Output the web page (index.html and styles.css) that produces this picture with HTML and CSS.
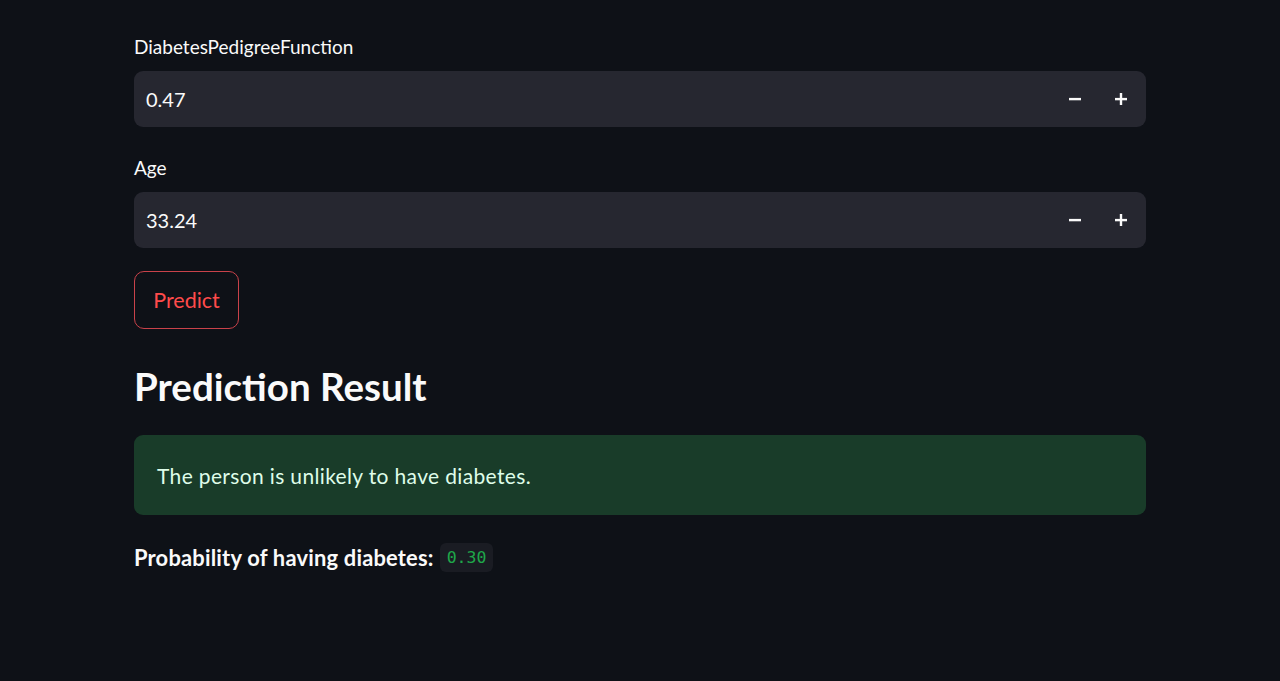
FILE: index.html
```html
<!DOCTYPE html>
<html>
<head>
<meta charset="utf-8">
<link rel="stylesheet" href="styles.css">
</head>
<body>
<main class="main">
  <div class="field">
    <label class="label">DiabetesPedigreeFunction</label>
    <div class="numinput">
      <span class="value">0.47</span>
      <div class="steps">
        <button class="step"><svg width="14" height="14" viewBox="0 0 14 14"><rect x="1" y="5.9" width="12" height="2.4" fill="#fafafa"/></svg></button>
        <button class="step"><svg width="14" height="14" viewBox="0 0 14 14"><rect x="1" y="5.9" width="12" height="2.4" fill="#fafafa"/><rect x="5.8" y="1" width="2.4" height="12" fill="#fafafa"/></svg></button>
      </div>
    </div>
  </div>
  <div class="field">
    <label class="label">Age</label>
    <div class="numinput">
      <span class="value">33.24</span>
      <div class="steps">
        <button class="step"><svg width="14" height="14" viewBox="0 0 14 14"><rect x="1" y="5.9" width="12" height="2.4" fill="#fafafa"/></svg></button>
        <button class="step"><svg width="14" height="14" viewBox="0 0 14 14"><rect x="1" y="5.9" width="12" height="2.4" fill="#fafafa"/><rect x="5.8" y="1" width="2.4" height="12" fill="#fafafa"/></svg></button>
      </div>
    </div>
  </div>
  <div class="btnrow"><button class="predict">Predict</button></div>
  <h2 class="heading">Prediction Result</h2>
  <div class="alert">The person is unlikely to have diabetes.</div>
  <p class="prob"><strong>Probability of having diabetes:</strong> <code class="code">0.30</code></p>
</main>
</body>
</html>
```

FILE: styles.css
```css
html, body {
  margin: 0;
  padding: 0;
  background: #0e1117;
  color: #fafafa;
  font-family: Lato, "Noto Sans", sans-serif;
  height: 100%;
}
.main {
  width: 1012px;
  margin-left: 134px;
  padding-top: 35px;
  display: flex;
  flex-direction: column;
}
.field {
  display: flex;
  flex-direction: column;
}
.field + .field {
  margin-top: 29px;
}
.label {
  font-size: 19px;
  line-height: 24px;
  height: 24px;
  margin-bottom: 12px;
}
.numinput {
  height: 56px;
  background: #262730;
  border-radius: 9px;
  display: flex;
  align-items: center;
  justify-content: space-between;
}
.value {
  padding-left: 12px;
  font-size: 20px;
}
.steps {
  display: flex;
  height: 100%;
  padding-right: 2px;
}
.step {
  width: 46px;
  height: 100%;
  border: 0;
  background: transparent;
  display: flex;
  align-items: center;
  justify-content: center;
  padding: 0;
}
.btnrow {
  display: flex;
  margin-top: 23px;
}
.predict {
  height: 58px;
  width: 105px;
  border: 1px solid #c9424a;
  border-radius: 10px;
  background: #0e1117;
  color: #ff4b4b;
  font-family: Lato, "Noto Sans", sans-serif;
  font-size: 21.5px;
  padding: 0;
}
.heading {
  font-size: 38.5px;
  font-weight: 700;
  margin: 35px 0 0 0;
  line-height: 44px;
  height: 44px;
}
.alert {
  margin-top: 27px;
  height: 80px;
  box-sizing: border-box;
  background: #193c29;
  color: #dffde9;
  border-radius: 9px;
  padding-left: 23px;
  display: flex;
  align-items: center;
  font-size: 21px;
  letter-spacing: 0.35px;
}
.prob {
  margin: 28px 0 0 0;
  font-size: 21.9px;
  letter-spacing: 0.2px;
  display: flex;
  align-items: center;
  gap: 6px;
}
.code {
  font-family: "DejaVu Sans Mono", monospace;
  font-size: 16.5px;
  letter-spacing: 0;
  color: #1fa84a;
  background: #1a1c23;
  border-radius: 6px;
  padding: 5px 7px;
}
```
